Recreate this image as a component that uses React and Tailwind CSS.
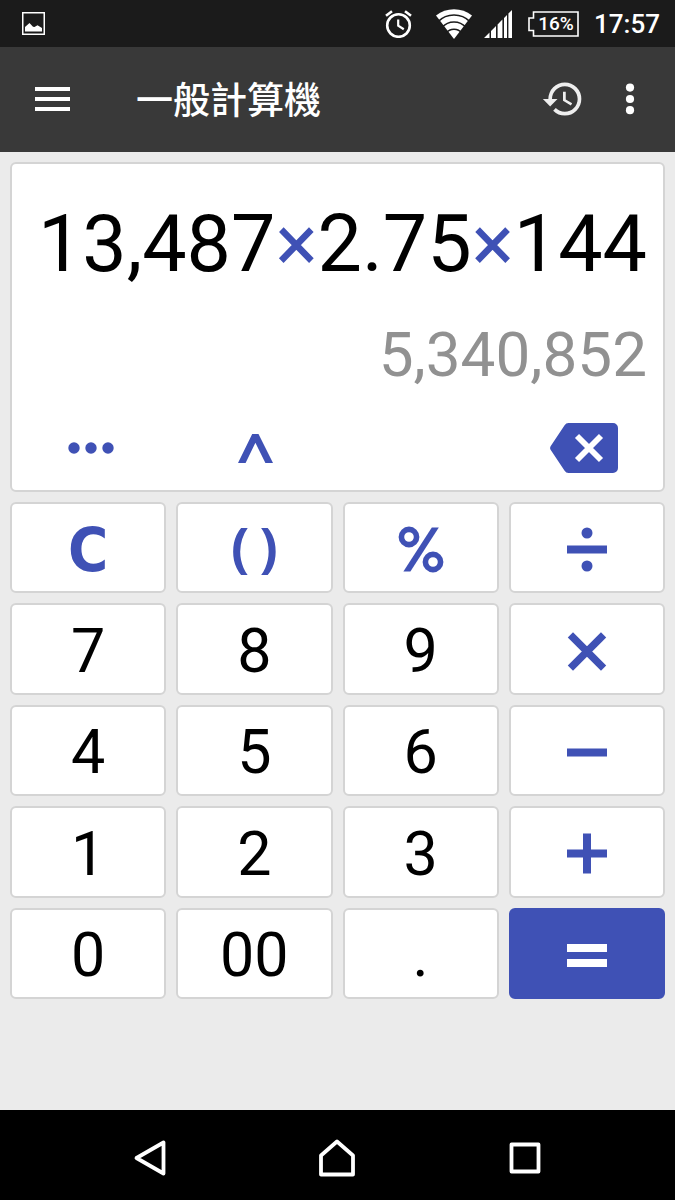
import { MdHistory } from "react-icons/md";

function StatusBar() {
  return (
    <div className="flex h-[47px] shrink-0 items-center bg-[#1b1b1b] pr-[15px] pl-[22px] text-white">
      <svg className="size-[23px]" viewBox="0 0 23 23" role="img" aria-label="Screenshot saved">
        <rect x="0.75" y="0.75" width="21.5" height="21.5" fill="none" stroke="currentColor" strokeWidth="1.5" />
        <path d="M3 19.5V15L7.5 11l3.5 3.8 1.5.2 3-1.8L20 16v3.5z" fill="currentColor" />
      </svg>
      <div className="ml-auto flex items-center">
        <svg className="h-7 w-[27px]" viewBox="0 0 27 28" fill="none" stroke="currentColor" role="img" aria-label="Alarm">
          <circle cx="13.5" cy="15.5" r="11.3" strokeWidth="2.6" />
          <path d="M13.2 9.5v6.2l5.6 3.6" strokeWidth="2.2" />
          <path d="M1 5.8L7 1.2M26 5.8L20 1.2" strokeWidth="2.6" />
        </svg>
        <svg className="ml-6 h-[31px] w-9" viewBox="0 0 36 31" role="img" aria-label="Wi-Fi">
          <path d="M18 31L0 7.6A29 29 0 0 1 36 7.6z" fill="currentColor" />
          <g fill="none" stroke="#1b1b1b" strokeWidth="1.5">
            <path d="M2 13.6A22.5 22.5 0 0 1 34 13.6" />
            <path d="M6 19.3A16 16 0 0 1 30 19.3" />
            <path d="M10 25.2A10 10 0 0 1 26 25.2" />
          </g>
        </svg>
        <svg className="ml-3 h-7 w-[28px]" viewBox="0 0 28 28" fill="currentColor" role="img" aria-label="Signal">
          <path d="M0 28L5.5 22.5V28zM7 28V21L12 16V28zM13.6 28V14.4L18.4 9.6V28zM20 28V8L23 5V28zM24.4 28V3.6L28 0V28z" />
        </svg>
        <div className="relative ml-4 flex h-[26px] w-[51px] items-center justify-center pl-[5px]">
          <svg className="absolute inset-0 size-full" viewBox="0 0 51 26" fill="none" stroke="currentColor" strokeWidth="1.6" aria-hidden="true">
            <path d="M5.5 1H50V25H5.5V19.5H1V7H5.5z" />
          </svg>
          <span className="text-[19px] leading-6 font-medium">16%</span>
        </div>
        <time className="ml-[15px] pt-px text-[26px] leading-8 font-medium">17:57</time>
      </div>
    </div>
  );
}

function AppBar() {
  return (
    <header className="flex h-[105px] shrink-0 items-center bg-[#393939] pr-[33px] pb-[2px] pl-[35px] text-white">
      <button type="button" aria-label="Menu">
        <svg className="block h-6 w-[35px]" viewBox="0 0 35 24" fill="currentColor">
          <path d="M0 0h35v4H0zM0 10h35v4H0zM0 20h35v4H0z" />
        </svg>
      </button>
      <h1 className="ml-[66px] pt-[6px] text-[37px] leading-[56px] font-medium">一般計算機</h1>
      <button type="button" aria-label="History" className="ml-auto text-[#eeeeee]">
        <MdHistory className="block size-[44px]" />
      </button>
      <button type="button" aria-label="More options" className="ml-[33px]">
        <svg className="block h-8 w-6" viewBox="0 0 24 32" fill="currentColor">
          <circle cx="12" cy="4.6" r="4.1" />
          <circle cx="12" cy="16" r="4.1" />
          <circle cx="12" cy="27.2" r="4.1" />
        </svg>
      </button>
    </header>
  );
}

function Display() {
  const tool = "flex h-[72px] items-center justify-center";
  return (
    <section className="rounded-md border-2 border-[#d4d4d4] bg-white pt-8 pb-[6px]">
      <div className="pr-4 text-right text-[79px] leading-[96px] whitespace-nowrap text-black">
        13,487<span className="text-[#3f51b5]">×</span>2.75<span className="text-[#3f51b5]">×</span>144
      </div>
      <output className="mt-[27px] block pr-4 text-right text-[62px] leading-[72px] text-[#919191]">5,340,852</output>
      <div className="mt-[21px] grid grid-cols-4 gap-[6px] text-[#3f51b5]">
        <button type="button" aria-label="More functions" className={tool}>
          <svg className="h-3 w-[46px]" viewBox="0 0 46 12" fill="currentColor">
            <circle cx="6" cy="6" r="5.7" />
            <circle cx="23" cy="6" r="5.7" />
            <circle cx="40" cy="6" r="5.7" />
          </svg>
        </button>
        <button type="button" aria-label="Power" className={tool}>
          <svg className="h-[29px] w-[35px]" viewBox="0 0 35 29" fill="currentColor">
            <path d="M0 29L14.2 0h6.3L35 29h-7.6L17.4 8.8 7.6 29z" />
          </svg>
        </button>
        <button type="button" aria-label="Backspace" className="col-start-4 flex h-[72px] items-center justify-center">
          <svg className="h-[50px] w-[68px]" viewBox="0 0 68 50">
            <path d="M18.5 0H63a5 5 0 0 1 5 5v40a5 5 0 0 1-5 5H18.5Q16 50 14.6 47.8L.6 26.8Q-.4 25 .6 23.2L14.6 2.2Q16 0 18.5 0z" fill="currentColor" />
            <path d="M27 13L51 37M51 13L27 37" stroke="#fff" strokeWidth="5.8" />
          </svg>
        </button>
      </div>
    </section>
  );
}

const operators = {
  percent: (
    <>
      <circle cx="11" cy="12" r="7.6" fill="none" stroke="currentColor" strokeWidth="5.6" />
      <circle cx="35" cy="37" r="7.6" fill="none" stroke="currentColor" strokeWidth="5.6" />
      <path d="M33.8 2.6h7L12.4 46.4h-7z" />
    </>
  ),
  divide: (
    <>
      <path d="M3 20.5h40v8H3z" />
      <circle cx="23" cy="8" r="5.5" />
      <circle cx="23" cy="41" r="5.5" />
    </>
  ),
  multiply: <path d="M6.4 7.9L39.6 41.1M39.6 7.9L6.4 41.1" stroke="currentColor" strokeWidth="7.4" />,
  minus: <path d="M3 20.5h40v8H3z" />,
  plus: <path d="M3 20.5h16v-16h8v16h16v8H27v16h-8v-16H3z" />,
  equals: <path d="M3 13h40v8H3zM3 28h40v8H3z" />,
};

function Operator({ name }) {
  return (
    <svg className="h-[49px] w-[46px]" viewBox="0 0 46 49" fill="currentColor" aria-hidden="true">
      {operators[name]}
    </svg>
  );
}

const keys = [
  { label: "Clear", word: "C" },
  { label: "Parentheses", pair: true },
  { label: "Percent", op: "percent" },
  { label: "Divide", op: "divide" },
  { text: "7" }, { text: "8" }, { text: "9" },
  { label: "Multiply", op: "multiply" },
  { text: "4" }, { text: "5" }, { text: "6" },
  { label: "Minus", op: "minus" },
  { text: "1" }, { text: "2" }, { text: "3" },
  { label: "Plus", op: "plus" },
  { text: "0" }, { text: "00" }, { text: "." },
  { label: "Equals", op: "equals", primary: true },
];

function Key({ item }) {
  const tone = item.primary
    ? "border-[#3f51b5] bg-[#3f51b5] text-white"
    : item.text
      ? "border-[#d4d4d4] bg-white text-black"
      : "border-[#d4d4d4] bg-white text-[#3f51b5]";
  return (
    <button
      type="button"
      aria-label={item.label}
      className={`flex items-center justify-center rounded-md border-2 pt-1 text-[61px] leading-[72px] ${tone}`}
    >
      {item.text}
      {item.word && <span className="font-['DejaVu_Sans_Condensed','DejaVu_Sans',sans-serif] font-bold">{item.word}</span>}
      {item.pair && (
        <span className="flex gap-[10px] pb-2 font-['Noto_Sans',sans-serif] text-[54px] leading-[64px] font-bold">
          <span>(</span>
          <span>)</span>
        </span>
      )}
      {item.op && <Operator name={item.op} />}
    </button>
  );
}

function NavBar() {
  const item = "flex h-full items-center justify-center pt-[6px]";
  return (
    <nav className="grid h-[90px] shrink-0 grid-cols-3 bg-black px-14 text-white">
      <button type="button" aria-label="Back" className={item}>
        <svg className="h-[38px] w-9" viewBox="0 0 36 38" fill="none" stroke="currentColor" strokeWidth="3.8" strokeLinejoin="round">
          <path d="M31.5 3.5v31L4.5 19z" />
        </svg>
      </button>
      <button type="button" aria-label="Home" className={item}>
        <svg className="h-[38px] w-9" viewBox="0 0 36 38" fill="none" stroke="currentColor" strokeWidth="3.8" strokeLinejoin="round">
          <path d="M18 2.5L34 16.5V35.5H2V16.5z" />
        </svg>
      </button>
      <button type="button" aria-label="Recent apps" className={item}>
        <svg className="h-[38px] w-9" viewBox="0 0 36 38" fill="none" stroke="currentColor" strokeWidth="3.8" strokeLinejoin="round">
          <path d="M4.5 5.5h27v27h-27z" />
        </svg>
      </button>
    </nav>
  );
}

export default function App() {
  return (
    <div className="flex min-h-screen flex-col bg-[#ebebeb] font-[Roboto,'Noto_Sans_CJK_TC',sans-serif]">
      <StatusBar />
      <AppBar />
      <main className="flex flex-1 flex-col gap-[10px] p-[10px]">
        <Display />
        <div className="grid min-h-[497px] auto-rows-fr grid-cols-4 gap-[10px]">
          {keys.map((item) => (
            <Key key={item.text ?? item.label} item={item} />
          ))}
        </div>
      </main>
      <NavBar />
    </div>
  );
}
